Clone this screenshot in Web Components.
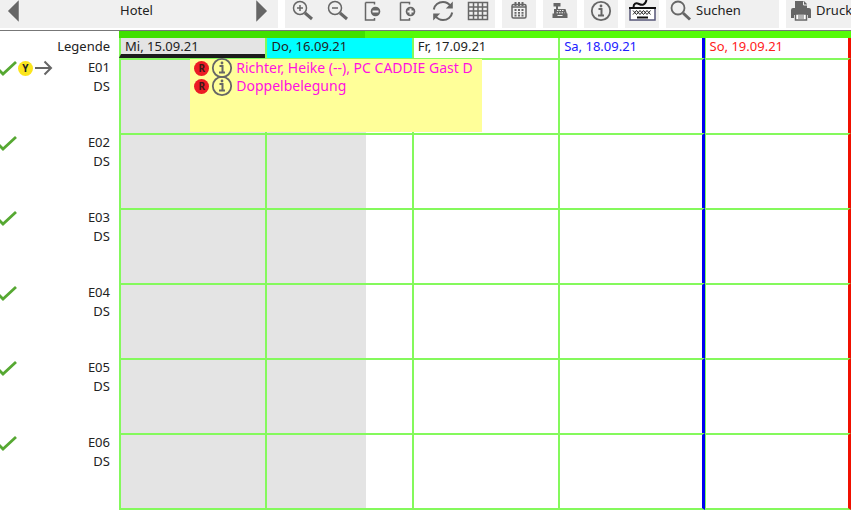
<!DOCTYPE html>
<html lang="de">
<head>
<meta charset="utf-8">
<title>Hotel</title>
<style>
  body {
    margin: 0;
    background: white;
    color: #222;
    font: 13px/18px "Noto Sans", "Open Sans", sans-serif;
  }
</style>
</head>
<body>
<hotel-toolbar>
  <tool-group class="title">
    <tool-button icon="prev" label="Zurück"></tool-button>
    <span>Hotel</span>
    <tool-button icon="next" label="Weiter"></tool-button>
  </tool-group>
  <tool-group>
    <tool-button icon="zoom-in" label="Vergrößern"></tool-button>
    <tool-button icon="zoom-out" label="Verkleinern"></tool-button>
    <tool-button icon="page-minus" label="Weniger Zeilen"></tool-button>
    <tool-button icon="page-plus" label="Mehr Zeilen"></tool-button>
    <tool-button icon="refresh" label="Aktualisieren"></tool-button>
    <tool-button icon="table" label="Tabelle"></tool-button>
  </tool-group>
  <tool-group class="single"><tool-button icon="calendar" label="Kalender"></tool-button></tool-group>
  <tool-group class="single"><tool-button icon="register" label="Kasse"></tool-button></tool-group>
  <tool-group class="single"><tool-button icon="info" label="Info"></tool-button></tool-group>
  <tool-group class="single"><tool-button icon="keyboard" label="Tastatur"></tool-button></tool-group>
  <tool-group class="search"><tool-button icon="search" wide>Suchen</tool-button></tool-group>
  <tool-group class="rest"><tool-button icon="printer" wide>Drucken</tool-button></tool-group>
</hotel-toolbar>
<room-planner></room-planner>

<script>
const TOOLBAR_NAME = "hotel-toolbar"
const TOOL_GROUP_NAME = "tool-group"
const TOOL_BUTTON_NAME = "tool-button"
const ICON_NAME = "ui-icon"
const ROOM_LABEL_NAME = "room-label"
const BOOKING_NAME = "booking-card"
const PLANNER_NAME = "room-planner"

const ICONS = {
  "prev": `<path d="M15 2v18L6 11z" fill="#666"/>`,
  "next": `<path d="M7 2v18l9-9z" fill="#666"/>`,
  "zoom-in": `<circle cx="8" cy="8" r="6.500"/><path d="M8 5v6M5 8h6"/><path d="M13 13l7 6" stroke-width="3"/>`,
  "zoom-out": `<circle cx="8" cy="8" r="6.500"/><path d="M5 8h6"/><path d="M13 13l7 6" stroke-width="3"/>`,
  "page-minus": `<path d="M3.500 2.500h9v2M3.500 2.500V20h9v-2"/><circle cx="13.500" cy="11.500" r="4.800" fill="#666" stroke="none"/><path d="M10.500 11.500h6" stroke="#f0f0f0" stroke-width="2"/>`,
  "page-plus": `<path d="M3.500 2.500h9v2M3.500 2.500V20h9v-2"/><circle cx="13.500" cy="11.500" r="4.800" fill="#666" stroke="none"/><path d="M10.500 11.500h6M13.500 8.500v6" stroke="#f0f0f0" stroke-width="2"/>`,
  "refresh": `<path d="M1.800 9.500C2.500 5 6.500 2 11 2c3 0 5.800 1.500 7.500 4M20.200 12.500c-.7 4.500-4.700 7.500-9.200 7.500-3 0-5.800-1.500-7.500-4" stroke-width="2"/><path d="M20.800 1.500v7h-7zM1.200 20.500v-7h7z" fill="#666" stroke="none"/>`,
  "table": `<path d="M1.500 2.500h19v17h-19zM1.500 7h19M1.500 11h19M1.500 15.500h19M6.500 2.500v17M11 2.500v17M15.500 2.500v17"/>`,
  "calendar": `<rect x="4" y="4.500" width="14" height="13.500" rx="1.500"/><path d="M7.500 2v4M11 2v4M14.500 2v4" stroke-width="2"/><path d="M4 7h14"/><path d="M6.500 10h9M6.500 12.800h9M6.500 15.500h9" stroke-width="1.800" stroke-dasharray="2 1.500"/>`,
  "register": `<path d="M4.500 3h7v3.500h-2.500V9h7.500l1.500 5h-13L5 9h2V6.500H4.500zM3.500 13.500h15V18h-15z" fill="#666" stroke="none"/><path d="M8 10.500h7M7.500 12.800h8" stroke="#f0f0f0" stroke-width="1" stroke-dasharray="1.500 1"/><path d="M8.500 15.500h5" stroke="#f0f0f0" stroke-width="1"/>`,
  "info": `<circle cx="11" cy="11" r="9.200" stroke-width="1.800"/><path d="M8.500 9h3v6M8 15.500h6" stroke-width="2"/><circle cx="11" cy="6" r="1.400" fill="#666" stroke="none"/>`,
  "keyboard": `<rect x="1" y="8" width="25" height="12" fill="#fff" stroke="#557" stroke-width="1.500"/><path d="M0 8h27" stroke="#111" stroke-width="2"/><path d="M4.500 7.500C4.500 3.500 7 2.500 10 4s6 1.500 7.500-4" stroke="#111" stroke-width="2"/><path d="M4 10.500l3.500 4 3.500-4 3.500 4 3.500-4 3.500 4M4 14.500l3.500-4 3.500 4 3.500-4 3.500 4 3.500-4" stroke="#222" stroke-width="1"/><path d="M8 17.500h11" stroke="#111" stroke-width="2"/>`,
  "search": `<circle cx="8" cy="8" r="6.500" stroke-width="1.800"/><path d="M13 13l7 6.500" stroke-width="3"/>`,
  "printer": `<path d="M5 1h9l3 3v4H5zM3 8h16q2 0 2 2v8h-3v-3H4v3H1v-8q0-2 2-2z" fill="#666" stroke="none"/><path d="M13.500 1.500V5H17" stroke="#f0f0f0" stroke-width="1"/><path d="M5.500 14h11v6h-11z" fill="#fff"/><path d="M8 16h6M8 18h6" stroke-width="1"/>`,
  "check": `<path d="M-3 9l6 6L16 3" stroke="#56a832" stroke-width="2.800"/>`,
  "arrow": `<path d="M0 9h16M9.500 2.500L16 9l-6.500 6.500" stroke-width="2"/>`
}

// [width, height] of the drawing area, 22x22 when not listed
const ICON_SIZES = {
  "keyboard": [27, 22],
  "check": [18, 18],
  "arrow": [18, 18]
}

const DAYS = [
  { text: "Mi, 15.09.21", type: "past current" },
  { text: "Do, 16.09.21", type: "today" },
  { text: "Fr, 17.09.21", type: "" },
  { text: "Sa, 18.09.21", type: "saturday" },
  { text: "So, 19.09.21", type: "sunday" }
]

const ROOMS = [
  { name: "E01", kind: "DS", marked: true, booking: ["Richter, Heike (--), PC CADDIE Gast D", "Doppelbelegung"] },
  { name: "E02", kind: "DS" },
  { name: "E03", kind: "DS" },
  { name: "E04", kind: "DS" },
  { name: "E05", kind: "DS" },
  { name: "E06", kind: "DS" }
]

/*Icon */
class UiIcon extends HTMLElement {
  constructor() {
    super();
    this.attachShadow({ mode: "open" });
  }

  connectedCallback() {
    this.render();
  }

  render(){
    const name = this.getAttribute("name");
    const [width, height] = ICON_SIZES[name] || [22, 22];
    this.shadowRoot.innerHTML = /*html*/ `
    <style>
      :host { display: inline-flex; flex: none; }
      svg { display: block; }
    </style>
    <svg width="${width}" height="${height}" viewBox="0 0 ${width} ${height}" fill="none" stroke="#666" stroke-width="1.500" aria-hidden="true">${ICONS[name]}</svg>
    `;
  }
}
window.customElements.define(ICON_NAME, UiIcon);

/*Toolbar */
class HotelToolbar extends HTMLElement {
  constructor() {
    super();
    this.attachShadow({ mode: "open" });
  }

  connectedCallback() {
    this.render();
  }

  render(){
    this.shadowRoot.innerHTML = /*html*/ `
    <style>
      :host {
        display: flex;
        gap: 7px;
        padding-bottom: 2px;
        border-bottom: 1px solid #777;
        overflow: hidden;
      }
    </style>
    <slot></slot>
    `;
  }
}
window.customElements.define(TOOLBAR_NAME, HotelToolbar);

class ToolGroup extends HTMLElement {
  constructor() {
    super();
    this.attachShadow({ mode: "open" });
  }

  connectedCallback() {
    this.render();
  }

  render(){
    this.shadowRoot.innerHTML = /*html*/ `
    <style>
      :host {
        display: flex;
        flex: none;
        height: 28px;
        background: #f0f0f0;
      }
      :host(.title) { width: 278px; }
      :host(.single) { width: 34px; justify-content: center; }
      :host(.search) { width: 113px; }
      :host(.rest) { flex: 1 0 auto; width: 66px; }
      ::slotted(span) {
        flex: 1;
        line-height: 20px;
      }
      ::slotted([icon="prev"]) { width: 120px; }
    </style>
    <slot></slot>
    `;
  }
}
window.customElements.define(TOOL_GROUP_NAME, ToolGroup);

class ToolButton extends HTMLElement {
  constructor() {
    super();
    this.attachShadow({ mode: "open" });
  }

  connectedCallback() {
    this.render();
  }

  render(){
    const label = this.getAttribute("label");
    this.shadowRoot.innerHTML = /*html*/ `
    <style>
      :host { display: block; flex: none; width: 35px; }
      :host([wide]) { width: auto; }
      button {
        display: flex;
        align-items: flex-start;
        justify-content: center;
        gap: 4px;
        width: 35px;
        height: 28px;
        margin: 0;
        padding: 0;
        border: 0;
        background: none;
        color: inherit;
        font: inherit;
        line-height: 20px;
        cursor: pointer;
      }
      :host([wide]) button {
        justify-content: flex-start;
        width: auto;
        padding-left: 4px;
      }
      :host([icon="prev"]) button { width: 28px; }
    </style>
    <button type="button" ${label ? `aria-label="${label}"` : ""}>
      <ui-icon name="${this.getAttribute("icon")}"></ui-icon><slot></slot>
    </button>
    `;
  }
}
window.customElements.define(TOOL_BUTTON_NAME, ToolButton);

/*Room label */
class RoomLabel extends HTMLElement {
  constructor() {
    super();
    this.attachShadow({ mode: "open" });
  }

  connectedCallback() {
    this.render();
  }

  render(){
    const marks = this.hasAttribute("marked")
      ? `<span class="badge">Y</span><ui-icon name="arrow"></ui-icon>`
      : "";
    this.shadowRoot.innerHTML = /*html*/ `
    <style>
      :host {
        display: flex;
        justify-content: space-between;
        padding-right: 9px;
        line-height: 19px;
        text-align: right;
      }
      .status {
        display: flex;
        align-items: center;
        height: 20px;
      }
      .badge {
        width: 15px;
        height: 15px;
        margin-right: 2px;
        border-radius: 50%;
        background: #fbe51d;
        font-size: 10px;
        font-weight: bold;
        line-height: 15px;
        text-align: center;
      }
    </style>
    <div class="status"><ui-icon name="check"></ui-icon>${marks}</div>
    <div><slot></slot></div>
    `;
  }
}
window.customElements.define(ROOM_LABEL_NAME, RoomLabel);

/*Booking */
class BookingCard extends HTMLElement {
  constructor() {
    super();
    this.attachShadow({ mode: "open" });
  }

  connectedCallback() {
    this.render();
  }

  render(){
    this.shadowRoot.innerHTML = /*html*/ `
    <style>
      :host {
        display: block;
        box-sizing: border-box;
        padding-left: 4px;
        background: #ffff99;
        color: #ff10e0;
        font-size: 14px;
        white-space: nowrap;
      }
      ::slotted(div) {
        display: flex;
        align-items: center;
        height: 18px;
      }
    </style>
    <slot></slot>
    `;
  }
}
window.customElements.define(BOOKING_NAME, BookingCard);

/*Planner */
class RoomPlanner extends HTMLElement {
  constructor() {
    super();
    this.attachShadow({ mode: "open" });
  }

  static get style() {
    return /*css*/ `
    :host {
      --line: #84f95c;
      --past: #e4e4e4;
      display: block;
    }

    table {
      width: 100%;
      table-layout: fixed;
      border-collapse: separate;
      border-spacing: 0;
    }

    th, td {
      box-sizing: border-box;
      padding: 0;
      font-weight: normal;
      text-align: left;
      vertical-align: top;
    }

    .labels { width: 119px; }

    .bar {
      height: 7px;
      background: linear-gradient(90deg, #40e000 33.6%, #55fb08 33.6%);
    }

    .days th {
      height: 20px;
      line-height: 16px;
    }

    .days .legend {
      padding-right: 9px;
      text-align: right;
    }

    .days .day {
      padding-left: 4px;
      border-left: 2px solid var(--line);
    }

    .days .past { background: var(--past); }
    .days .current { border-bottom: 4px solid #1c1c1c; }
    .days .today { background: cyan; }
    .days .saturday { color: #2020ff; }
    .days .sunday { color: #ff2020; }

    .saturday { border-right: 3px solid #0000f0; }
    .sunday { border-right: 3px solid #f01000; }

    tbody th { height: 75px; }

    tbody td {
      position: relative;
      border-top: 2px solid var(--line);
      border-left: 2px solid var(--line);
    }

    .days .sunday, tbody .sunday { border-left-width: 1px; }

    tbody tr:last-child th { height: 77px; }
    tbody tr:last-child td { border-bottom: 2px solid var(--line); }
    tbody .past { background: var(--past); z-index: 1; }
    tbody .today { background: linear-gradient(90deg, var(--past) 68%, transparent 68%); }

    booking-card {
      position: absolute;
      top: -1px;
      bottom: 1px;
      left: 48%;
      width: 202%;
    }

    .reserved {
      width: 15px;
      height: 15px;
      margin-right: 2px;
      border-radius: 50%;
      background: #ec1c24;
      color: #3a1a1a;
      font-size: 10px;
      font-weight: bold;
      line-height: 15px;
      text-align: center;
    }

    booking-card ui-icon { margin-right: 3px; }
    `;
  }

  connectedCallback() {
    this.render();
  }

  renderBooking(lines){
    if(!lines) return "";
    return `<booking-card>${lines.map((line) => `
      <div><span class="reserved">R</span><ui-icon name="info"></ui-icon><span>${line}</span></div>`).join("")}
    </booking-card>`;
  }

  renderRoom(room){
    const cells = DAYS.map((day, i) => `<td class="${day.type}">${i === 0 ? this.renderBooking(room.booking) : ""}</td>`);
    return `
      <tr>
        <th scope="row"><room-label ${room.marked ? "marked" : ""}>${room.name}<br>${room.kind}</room-label></th>
        ${cells.join("")}
      </tr>`;
  }

  render(){
    this.shadowRoot.innerHTML = /*html*/ `
    <style>
      ${RoomPlanner.style}
    </style>
    <table>
      <colgroup><col class="labels"><col span="${DAYS.length}"></colgroup>
      <thead>
        <tr><td></td><td class="bar" colspan="${DAYS.length}"></td></tr>
        <tr class="days">
          <th class="legend">Legende</th>
          ${DAYS.map((day) => `<th scope="col" class="day ${day.type}">${day.text}</th>`).join("")}
        </tr>
      </thead>
      <tbody>
        ${ROOMS.map((room) => this.renderRoom(room)).join("")}
      </tbody>
    </table>
    `;
  }
}
window.customElements.define(PLANNER_NAME, RoomPlanner);
</script>
</body>
</html>
